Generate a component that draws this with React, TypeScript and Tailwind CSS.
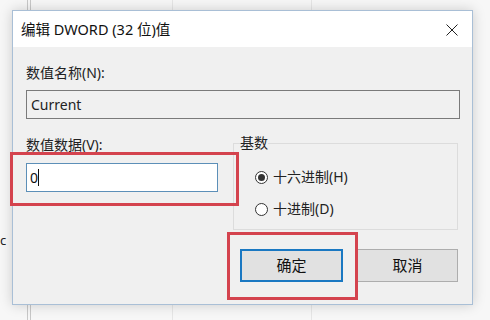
import React from 'react';

const cjk = { fontFamily: '"Segoe UI", "Noto Sans", "Noto Sans CJK SC", sans-serif' };

const Radio = ({ checked, label }: { checked?: boolean; label: string }) => (
  <div className="flex items-center h-[18px] gap-[5px]">
    <span className="w-[13px] h-[13px] rounded-full border border-[#333] bg-white flex items-center justify-center">
      {checked && <span className="w-[7px] h-[7px] rounded-full bg-[#333]"></span>}
    </span>
    <span className="text-[14px] leading-[18px] text-[#222]">{label}</span>
  </div>
);

export default function App() {
  return (
    <div className="relative w-[490px] h-[320px] overflow-hidden bg-[#f7f7f7]" style={cjk}>
      {/* desktop behind the dialog */}
      <div className="absolute inset-0 flex pointer-events-none">
        <div className="w-[27px]"></div>
        <div className="w-px bg-[#c8c8c8]"></div>
        <div className="w-[2px]"></div>
        <div className="w-px bg-[#c8c8c8]"></div>
        <div className="w-[141px]"></div>
        <div className="w-px bg-[#e6e6e6]"></div>
        <div className="w-[138px]"></div>
        <div className="w-px bg-[#e6e6e6]"></div>
      </div>
      <span className="absolute left-0 top-[231px] text-[13px] leading-[18px] text-[#222]">c</span>

      {/* dialog window */}
      <div className="absolute left-[12px] top-[10px] w-[461px] h-[295px] flex flex-col border border-[#a9bfd6] shadow-[0_0_12px_rgba(0,0,0,0.18)]">
        <div className="h-[36px] bg-white flex items-center justify-between pl-[8px] pr-[14px]">
          <span className="text-[14.5px] text-[#111] leading-[18px]">编辑 DWORD (32 位)值</span>
          <svg width="12" height="12" viewBox="0 0 12 12" className="mt-[1px]">
            <path d="M0.5 0.5 L11.5 11.5 M11.5 0.5 L0.5 11.5" stroke="#222" strokeWidth="1" />
          </svg>
        </div>

        <div className="flex-1 bg-[#f0f0f0] flex flex-col pl-[13px]">
          <div className="mt-[17px] text-[14px] leading-[18px] text-[#222]">数值名称(N):</div>
          <div className="mt-[8px] w-[434px] h-[29px] border border-[#7a7a7a] bg-[#f0f0f0] flex items-center px-[4px] text-[14px] text-[#222]">
            Current
          </div>

          <div className="flex mt-[17px]">
            <div className="w-[192px] flex flex-col">
              <div className="text-[14px] leading-[18px] text-[#222]">数值数据(V):</div>
              <div className="mt-[9px] h-[29px] border border-[#5c8fb8] bg-white flex items-center px-[3px] text-[14px] text-[#111]">
                0<span className="w-px h-[17px] bg-[#111]"></span>
              </div>
            </div>
            <fieldset className="ml-[15px] -mt-[2px] w-[225px] h-[96px] border border-[#dcdcdc] pl-[21px] pt-[16px] flex flex-col gap-[14px]">
              <legend className="-ml-[15px] text-[14px] leading-[18px] text-[#222]">基数</legend>
              <Radio checked label="十六进制(H)" />
              <Radio label="十进制(D)" />
            </fieldset>
          </div>

          <div className="flex mt-[19px] ml-[214px] gap-[14px]">
            <button className="w-[103px] h-[33px] bg-[#e1e1e1] border-2 border-[#1a78c2] text-[15px] text-[#111]">确定</button>
            <button className="w-[101px] h-[33px] bg-[#e1e1e1] border border-[#adadad] text-[15px] text-[#111]">取消</button>
          </div>
        </div>
      </div>

      {/* red annotation boxes */}
      <div className="absolute left-[10px] top-[152px] w-[229px] h-[54px] border-[3px] border-[#d4434e] pointer-events-none"></div>
      <div className="absolute left-[227px] top-[232px] w-[131px] h-[68px] border-[3px] border-[#d4434e] pointer-events-none"></div>
    </div>
  );
}
